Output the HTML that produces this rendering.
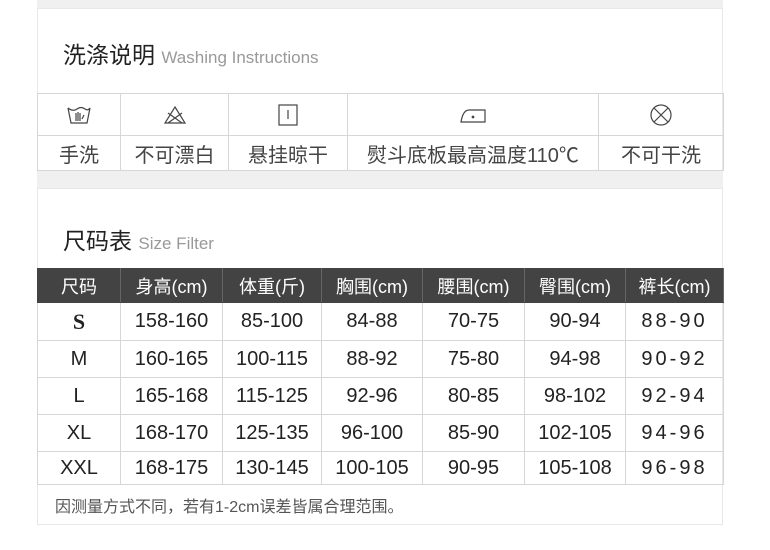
<!DOCTYPE html><html><head><meta charset="utf-8"><style>
*{margin:0;padding:0;box-sizing:border-box}
body{width:770px;height:550px;background:#fff;position:relative;overflow:hidden;font-family:"Liberation Sans","Noto Sans CJK SC",sans-serif;color:#333}
.a{position:absolute}
.band{position:absolute;left:37px;width:686px;background:#f0f0f0}
.card{position:absolute;left:37px;width:686px;border:1px solid #e8e8e8;background:#fff}
table{position:absolute;border-collapse:collapse;table-layout:fixed}
td{text-align:center;border:1px solid #d6d6d6;padding:0;white-space:nowrap}
.w td{color:#444;font-size:20px}
.s td{font-size:20px;color:#222}
.s tr.h td{background:#434343;color:#fff;font-size:18px;border-color:#434343;border-right-color:#666}
svg{display:block;margin:auto}
</style></head><body>
<div class="band" style="top:0;height:9px"></div>
<div class="card" style="top:8px;height:163px;border-bottom:none"></div>
<div class="a" style="left:63px;top:36px;font-size:23px;color:#222">洗涤说明 <span style="font-size:17px;color:#999">Washing Instructions</span></div>
<table class="w" style="left:37px;top:93px;width:686px">
<colgroup><col style="width:83px"><col style="width:108px"><col style="width:119px"><col style="width:251px"><col style="width:125px"></colgroup>
<tr style="height:42px">
<td><svg width="24" height="20" viewBox="0 0 24 20" fill="none" stroke="#444" stroke-width="1.2"><path d="M1 3 L4 18 H20 L23 3"/><path d="M1 3 Q6 7 10 4 Q14 1 18 4 Q21 6 23 3"/><path d="M9 16 V8 M11 16 V7 M13 16 V8 M15 14 L17 10"/></svg></td>
<td><svg width="24" height="20" viewBox="0 0 24 20" fill="none" stroke="#444" stroke-width="1.2"><path d="M12 2 L22 18 H2 Z"/><path d="M5 8 L19 18 M19 8 L5 18"/></svg></td>
<td><svg width="20" height="22" viewBox="0 0 20 22" fill="none" stroke="#444" stroke-width="1.2"><rect x="1" y="1" width="18" height="20"/><path d="M10 6 V15"/></svg></td>
<td><svg width="28" height="18" viewBox="0 0 28 18" fill="none" stroke="#444" stroke-width="1.2"><path d="M2 16 H26 V4 H10 Q4 4 2 16 Z"/><circle cx="14" cy="11" r="0.8" fill="#444"/></svg></td>
<td><svg width="24" height="24" viewBox="0 0 24 24" fill="none" stroke="#444" stroke-width="1.2"><circle cx="12" cy="12" r="10"/><path d="M5 5 L19 19 M19 5 L5 19"/></svg></td>
</tr>
<tr style="height:35px"><td>手洗</td><td>不可漂白</td><td>悬挂晾干</td><td>熨斗底板最高温度110℃</td><td>不可干洗</td></tr>
</table>
<div class="band" style="top:171px;height:18px"></div>
<div class="card" style="top:188px;height:337px"></div>
<div class="a" style="left:63px;top:222px;font-size:23px;color:#222">尺码表 <span style="font-size:17px;color:#999">Size Filter</span></div>
<table class="s" style="left:37px;top:268px;width:686px">
<colgroup><col style="width:83px"><col style="width:102px"><col style="width:99px"><col style="width:101px"><col style="width:102px"><col style="width:101px"><col style="width:98px"></colgroup>
<tr class="h" style="height:34px"><td>尺码</td><td>身高(cm)</td><td>体重(斤)</td><td>胸围(cm)</td><td>腰围(cm)</td><td>臀围(cm)</td><td>裤长(cm)</td></tr>
<tr style="height:38px"><td style="font-family:'Liberation Serif',serif;font-weight:bold;font-size:22px">S</td><td>158-160</td><td>85-100</td><td>84-88</td><td>70-75</td><td>90-94</td><td style="letter-spacing:3px">88-90</td></tr>
<tr style="height:37px"><td>M</td><td>160-165</td><td>100-115</td><td>88-92</td><td>75-80</td><td>94-98</td><td style="letter-spacing:3px">90-92</td></tr>
<tr style="height:37px"><td>L</td><td>165-168</td><td>115-125</td><td>92-96</td><td>80-85</td><td>98-102</td><td style="letter-spacing:3px">92-94</td></tr>
<tr style="height:37px"><td>XL</td><td>168-170</td><td>125-135</td><td>96-100</td><td>85-90</td><td>102-105</td><td style="letter-spacing:3px">94-96</td></tr>
<tr style="height:33px"><td>XXL</td><td>168-175</td><td>130-145</td><td>100-105</td><td>90-95</td><td>105-108</td><td style="letter-spacing:3px">96-98</td></tr>
</table>
<div class="a" style="left:55px;top:493px;font-size:16px;color:#555">因测量方式不同，若有1-2cm误差皆属合理范围。</div>
</body></html>
